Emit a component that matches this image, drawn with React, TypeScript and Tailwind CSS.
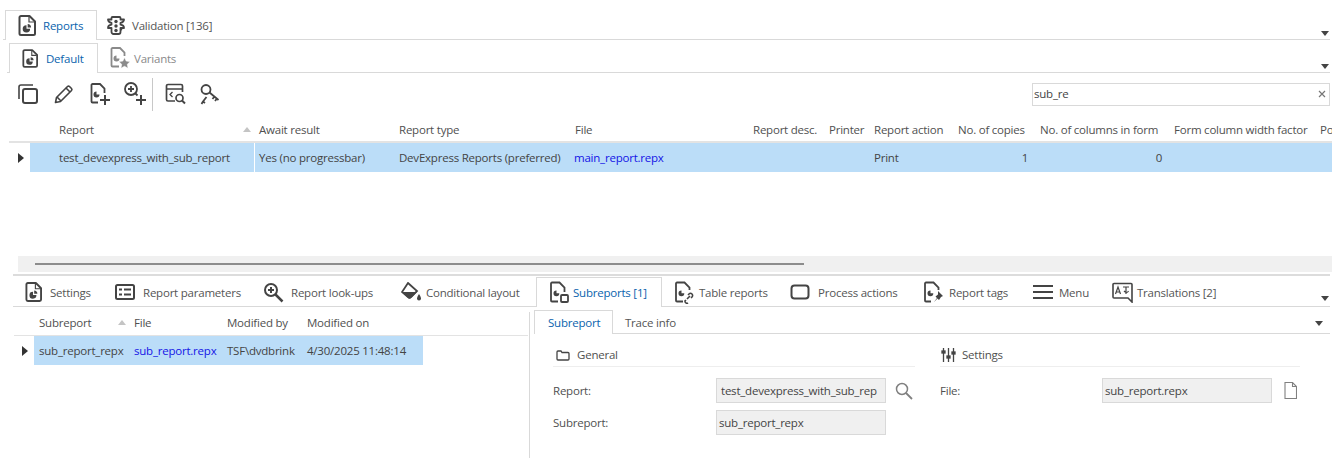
import React from "react";

const stroke = "#444444";

function Doc({ children, w = 18, h = 21, color = stroke }: { children?: React.ReactNode; w?: number; h?: number; color?: string }) {
  return (
    <svg width={w} height={h} viewBox="0 0 18 21" fill="none" className="shrink-0">
      <path d="M3 1h8.500L17 6.500V18.500A1.500 1.500 0 0 1 15.500 20H3A1.500 1.500 0 0 1 1.500 18.500V2.500A1.500 1.500 0 0 1 3 1z" stroke={color} strokeWidth="2" strokeLinejoin="round" />
      <path d="M11 1.500V7h5.500" stroke={color} strokeWidth="1.200" />
      {children}
    </svg>
  );
}
const Pie = ({ c = stroke }: { c?: string }) => (
  <g fill={c}>
    <path d="M8.500 10.200v3.600h3.600a3.700 3.700 0 1 1-3.600-3.600z" />
    <path d="M9.700 9a3.600 3.600 0 0 1 3.400 3.400H9.700z" />
  </g>
);
const DocPie = ({ w = 18, h = 21 }: { w?: number; h?: number }) => <Doc w={w} h={h}><Pie /></Doc>;

function Ic({ w, h, children }: { w: number; h: number; children: React.ReactNode }) {
  return (
    <svg width={w} height={h} viewBox={`0 0 ${w} ${h}`} fill="none" stroke={stroke} strokeWidth="2" className="shrink-0">
      {children}
    </svg>
  );
}

function Caret() {
  return (
    <svg width="8" height="5" viewBox="0 0 8 5" className="shrink-0">
      <path d="M0 0h8L4 5z" fill="#444444" />
    </svg>
  );
}
const SortUp = () => (
  <svg width="8" height="5" viewBox="0 0 8 5" className="shrink-0">
    <path d="M0 5h8L4 0z" fill="#c4c4c4" />
  </svg>
);
const RowMark = () => (
  <svg width="6" height="10" viewBox="0 0 6 10" className="shrink-0">
    <path d="M0 0l6 5-6 5z" fill="#333333" />
  </svg>
);

function Tab({ active, icon, label, w, h, gap = 8, pl = 12, muted }: { active?: boolean; icon?: React.ReactNode; label: string; w: number; h: number; gap?: number; pl?: number; muted?: boolean }) {
  return (
    <div
      style={{ width: w, height: h, paddingLeft: pl, gap }}
      className={
        "flex items-center shrink-0 whitespace-nowrap -mb-px " +
        (active
          ? "bg-white border border-b-0 border-[#d9d9d9] text-[#0a63ad] relative "
          : muted
          ? "text-[#8a8a8a] border border-transparent "
          : "text-[#555555] border border-transparent ")
      }
    >
      {icon}
      <span className="pt-[1px]">{label}</span>
    </div>
  );
}

function Tool({ w, children }: { w: number; children: React.ReactNode }) {
  return <div style={{ width: w }} className="flex items-center justify-start shrink-0">{children}</div>;
}

function Cell({ w, pl = 5, pr = 0, right, blue, children }: { w: number; pl?: number; pr?: number; right?: boolean; blue?: boolean; children?: React.ReactNode }) {
  return (
    <div
      style={{ width: w, paddingLeft: pl, paddingRight: pr }}
      className={
        "h-full flex items-center shrink-0 whitespace-nowrap overflow-hidden " +
        (right ? "justify-end " : "") +
        (blue ? "text-[#1414e6] " : "")
      }
    >
      {children}
    </div>
  );
}

const Plus = ({ x, y }: { x: number; y: number }) => (
  <path d={`M${x - 5} ${y}h10M${x} ${y - 5}v10`} strokeWidth="2" stroke={stroke} />
);

function Field({ label, value, lw, pl = 2, icon }: { label: string; value: string; lw: number; pl?: number; icon?: React.ReactNode }) {
  return (
    <div className="flex items-center h-[25px]">
      <div style={{ width: lw }} className="shrink-0">{label}</div>
      <div style={{ paddingLeft: pl }} className="w-[170px] h-[25px] shrink-0 bg-[#f0f0f0] border border-[#d9d9d9] flex items-center whitespace-nowrap overflow-hidden text-[#444444]">{value}</div>
      {icon}
    </div>
  );
}

export default function App() {
  return (
    <div className="w-[1334px] h-[458px] overflow-hidden bg-white text-[11.5px] leading-[16px] text-[#505050] tracking-[-0.22px]" style={{ fontFamily: '"Open Sans", "Noto Sans", sans-serif' }}>
      {/* top tabs */}
      <div className="h-[40px] pt-[10px] ml-[3px] mr-[4px] border-b border-[#d9d9d9] flex items-end pl-[2px]">
        <Tab active w={92} h={30} pl={12} gap={7} label="Reports" icon={<DocPie w={18} h={21} />} />
        <Tab w={126} h={30} pl={9} gap={7} label="Validation [136]" icon={
          <Ic w={18} h={19}>
            <path d="M5.500 1h7a1 1 0 0 1 1 1v1.500h3.500c0 2-1.500 3-3.500 3.300v1.900c2 .3 3.500 1.300 3.500 3.300h-3.500v1.500c2 .3 0 0 0 0v2.500a2 2 0 0 1-2 2h-5a2 2 0 0 1-2-2V12h0H1c0-2 1.500-3 3.500-3.300V6.800C2.500 6.500 1 5.500 1 3.500h3.500V2a1 1 0 0 1 1-1z" strokeWidth="1.800" strokeLinejoin="round" />
            <circle cx="9" cy="5.500" r="1.700" fill={stroke} stroke="none" />
            <circle cx="9" cy="10" r="1.700" fill={stroke} stroke="none" />
            <circle cx="9" cy="14.500" r="1.700" fill={stroke} stroke="none" />
          </Ic>
        } />
        <div className="ml-auto mb-[3px] mr-[1px]"><Caret /></div>
      </div>
      {/* second tabs */}
      <div className="h-[33px] pt-[3px] ml-[7px] mr-[4px] border-b border-[#d9d9d9] flex items-end pl-[2px]">
        <Tab active w={89} h={30} pl={12} gap={8} label="Default" icon={<DocPie w={16} h={19} />} />
        <Tab muted w={100} h={30} pl={11} gap={4} label="Variants" icon={
          <svg width="20" height="23" viewBox="0 0 20 23" fill="none" className="shrink-0">
            <path d="M9 19.500H2.500a1 1 0 0 1-1-1V2a1 1 0 0 1 1-1h7.500l4.500 4.500V9" stroke="#8a8a8a" strokeWidth="1.800" />
            <path d="M6.500 8.500v3h3a3 3 0 1 1-3-3z" fill="#8a8a8a" />
            <path d="M14.500 10.500l1.700 3.600 4 .5-2.900 2.700.8 4-3.600-2-3.600 2 .8-4-2.900-2.700 4-.5z" fill="#8a8a8a" stroke="#fff" strokeWidth=".6" />
          </svg>
        } />
        <div className="ml-auto mb-[3px] mr-[1px]"><Caret /></div>
      </div>
      {/* toolbar */}
      <div className="h-[42px] flex items-center pl-[18px] pr-[4px]">
        <Tool w={36}>
          <Ic w={20} h={20}>
            <rect x="5" y="5" width="14" height="14" rx="2" />
            <path d="M1 15V3a2 2 0 0 1 2-2h12" strokeWidth="1.600" />
          </Ic>
        </Tool>
        <Tool w={36}>
          <svg width="20" height="20" viewBox="0 0 20 20" fill="none" stroke={stroke} strokeWidth="1.600">
            <path d="M1.500 18.500l1-5L13.500 2.500a1.500 1.500 0 0 1 2 0l2 2a1.500 1.500 0 0 1 0 2L6.500 17.500z" strokeLinejoin="round" />
            <path d="M12 4l4 4M3 13l4 4" />
          </svg>
        </Tool>
        <Tool w={33}>
          <svg width="21" height="23" viewBox="0 0 21 23" fill="none">
            <path d="M8 19.500H2.500a1 1 0 0 1-1-1V2a1 1 0 0 1 1-1h7.500l4.500 4.500V10" stroke={stroke} strokeWidth="1.800" />
            <path d="M6.500 8.500v3h3a3 3 0 1 1-3-3z" fill={stroke} />
            <Plus x={15} y={17} />
          </svg>
        </Tool>
        <Tool w={29}>
          <svg width="24" height="24" viewBox="0 0 24 24" fill="none" stroke={stroke} strokeWidth="1.800" className="mb-[1px]">
            <circle cx="8" cy="7" r="6" />
            <path d="M8 4v6M5 7h6" />
            <path d="M12.500 11.500l2 2" />
            <Plus x={18} y={18} />
          </svg>
        </Tool>
        <div className="w-px h-[33px] bg-[#c8c8c8] shrink-0 mr-[12px]" />
        <Tool w={35}>
          <svg width="22" height="22" viewBox="0 0 22 22" fill="none" stroke={stroke} strokeWidth="1.700">
            <path d="M10 18H3a1.500 1.500 0 0 1-1.500-1.500V3A1.500 1.500 0 0 1 3 1.500h13A1.500 1.500 0 0 1 17.500 3v6M1.500 6h16" />
            <path d="M7.500 9L5 11.500 7.500 14" strokeWidth="1.300" />
            <circle cx="14.500" cy="15" r="3.500" />
            <path d="M17 17.500l3 3" strokeWidth="2" />
          </svg>
        </Tool>
        <Tool w={24}>
          <svg width="20" height="21" viewBox="0 0 20 21" fill="none" stroke={stroke} strokeWidth="1.800">
            <circle cx="6" cy="5.500" r="4.500" />
            <path d="M9.500 8.500l9 7.500M14.500 12.500l-2 2.500M17 14.500l-2 2.500" />
            <path d="M6.500 13L3 17.500M3 17.500l2 1.500M3 17.500L1.500 20" />
          </svg>
        </Tool>
        <div className="ml-auto w-[298px] h-[23px] border border-[#d9d9d9] flex items-center pl-[1px] pr-[3px] text-[#444444]">
          <span>sub_re</span>
          <svg width="8" height="8" viewBox="0 0 8 8" className="ml-auto" stroke="#777777" strokeWidth="1.200"><path d="M1 1l6 6M7 1L1 7" /></svg>
        </div>
      </div>
      {/* main grid header */}
      <div className="h-[28px] pt-[3px] ml-[9px] mr-[2px] border-b-2 border-[#e3e3e3] flex items-center">
        <Cell w={21} pl={0} />
        <Cell w={224} pl={29}>
          <span>Report</span>
          <span className="ml-auto mr-[3px]"><SortUp /></span>
        </Cell>
        <Cell w={140}>Await result</Cell>
        <Cell w={176}>Report type</Cell>
        <Cell w={178}>File</Cell>
        <Cell w={76}>Report desc.</Cell>
        <Cell w={45}>Printer</Cell>
        <Cell w={84}>Report action</Cell>
        <Cell w={81}>No. of copies</Cell>
        <Cell w={134} pl={6}>No. of columns in form</Cell>
        <Cell w={149} pl={6}>Form column width factor</Cell>
        <Cell w={15} pl={3}>Po</Cell>
      </div>
      {/* main grid row */}
      <div className="h-[29px] flex ml-[18px] mr-[2px] text-[#444444]">
        <div className="w-[12px] h-full flex items-center shrink-0"><RowMark /></div>
        <div className="h-full flex-1 flex bg-[#bbddf8] items-center overflow-hidden">
          <Cell w={224} pl={29}>test_devexpress_with_sub_report</Cell>
          <div className="w-px h-full bg-white shrink-0" />
          <Cell w={139} pl={4}>Yes (no progressbar)</Cell>
          <Cell w={176}>DevExpress Reports (preferred)</Cell>
          <Cell w={178} pl={4} blue>main_report.repx</Cell>
          <Cell w={76} />
          <Cell w={45} />
          <Cell w={84}>Print</Cell>
          <Cell w={81} pr={6} right>1</Cell>
          <Cell w={134} pr={6} right>0</Cell>
        </div>
      </div>
      {/* scrollbar */}
      <div className="mt-[84px] h-[16px] ml-[18px] mr-[2px] bg-[#f0f0f0] flex items-center pl-[17px]">
        <div className="w-[769px] h-[2px] bg-[#8c8c8c]" />
      </div>
      {/* lower tabs */}
      <div className="mt-[2px] h-[2px] ml-[13px] mr-[4px] bg-[#dcdcdc]" />
      <div className="h-[31px] ml-[13px] mr-[4px] border-b border-[#d9d9d9] flex items-end">
        <Tab w={90} h={30} pl={11} gap={8} label="Settings" icon={<DocPie w={17} h={20} />} />
        <Tab w={149} h={30} pl={11} gap={8} label="Report parameters" icon={
          <Ic w={20} h={16}>
            <rect x="1" y="1" width="18" height="14" rx="1.500" />
            <path d="M4 5.500h3M9 5.500h7M4 10.500h3M9 10.500h7" />
          </Ic>
        } />
        <Tab w={136} h={30} pl={10} gap={7} label="Report look-ups" icon={
          <svg width="21" height="21" viewBox="0 0 21 21" fill="none" stroke={stroke} strokeWidth="2" className="shrink-0">
            <circle cx="8" cy="8" r="6" />
            <path d="M8 5v6M5 8h6" />
            <path d="M12.500 12.500l7 7" strokeWidth="2.500" />
          </svg>
        } />
        <Tab w={148} h={30} pl={12} gap={5} label="Conditional layout" icon={
          <svg width="20" height="20" viewBox="0 0 20 20" className="shrink-0">
            <path d="M7 1l9 8-6 6a2 2 0 0 1-3 0L1 10z" fill="none" stroke={stroke} strokeWidth="1.800" />
            <path d="M1 10h15l-6 6a2 2 0 0 1-3 0z" fill={stroke} />
            <path d="M18 12c1.500 2.500 2 3.500 2 4.500a2 2 0 0 1-4 0c0-1 .5-2 2-4.500z" fill={stroke} />
          </svg>
        } />
        <Tab active w={126} h={30} pl={12} gap={3} label="Subreports [1]" icon={
          <svg width="21" height="23" viewBox="0 0 21 23" fill="none" className="shrink-0">
            <path d="M9 20.500H3a1 1 0 0 1-1-1V2.500a1 1 0 0 1 1-1h7.500l5 5V11" stroke={stroke} strokeWidth="1.800" />
            <path d="M7.500 9.500v2.800h2.800a2.900 2.900 0 1 1-2.800-2.800z" fill={stroke} />
            <rect x="12" y="14" width="7" height="7" rx="1" stroke={stroke} strokeWidth="1.800" />
          </svg>
        } />
        <Tab w={127} h={30} pl={11} gap={4} label="Table reports" icon={
          <svg width="21" height="23" viewBox="0 0 21 23" fill="none" className="shrink-0">
            <path d="M9 20.500H3a1 1 0 0 1-1-1V2.500a1 1 0 0 1 1-1h7.500l5 5V9" stroke={stroke} strokeWidth="1.800" />
            <path d="M7.500 9.500v2.800h2.800a2.900 2.900 0 1 1-2.800-2.800z" fill={stroke} />
            <path d="M12 19l-1 1a2 2 0 0 0 3 2M14 14l1-1a2 2 0 0 1 3 3l-1 1M13 18l3-3" stroke={stroke} strokeWidth="1.600" />
          </svg>
        } />
        <Tab w={133} h={30} pl={0} gap={8} label="Process actions" icon={
          <Ic w={20} h={16}>
            <rect x="1.500" y="1.500" width="17" height="13" rx="3" />
          </Ic>
        } />
        <Tab w={109} h={30} pl={0} gap={5} label="Report tags" icon={
          <svg width="21" height="23" viewBox="0 0 21 23" fill="none" className="shrink-0">
            <path d="M8 20.500H3a1 1 0 0 1-1-1V2.500a1 1 0 0 1 1-1h7.500l5 5V9" stroke={stroke} strokeWidth="1.800" />
            <path d="M7.500 9.500v2.800h2.800a2.900 2.900 0 1 1-2.800-2.800z" fill={stroke} />
            <path d="M15 10l5 5-2 1-2 3-1.500-1.500L11 21l3-4-1.500-1.500 2.500-2z" fill={stroke} />
          </svg>
        } />
        <Tab w={80} h={30} pl={0} gap={6} label="Menu" icon={
          <Ic w={21} h={16}>
            <path d="M1 2h20M1 8h20M1 14h20" />
          </Ic>
        } />
        <Tab w={120} h={30} pl={0} gap={4} label="Translations [2]" icon={
          <svg width="21" height="21" viewBox="0 0 21 21" fill="none" className="shrink-0">
            <path d="M2 1.500h17a1 1 0 0 1 1 1V20l-4-4H2a1 1 0 0 1-1-1V2.500a1 1 0 0 1 1-1z" stroke={stroke} strokeWidth="1.600" />
            <path d="M3.500 12L6 5l2.500 7M4.500 10h3M11 5h6M12 9c2 2 3.500 2 4.500 0M14 5v7" stroke={stroke} strokeWidth="1.200" />
          </svg>
        } />
        <div className="ml-auto mb-[5px] mr-[1px]"><Caret /></div>
      </div>
      {/* lower panels */}
      <div className="flex h-[151px] ml-[14px]">
        <div className="w-[515px] shrink-0">
          <div className="h-[29px] pt-[3px] border-b border-[#e3e3e3] flex items-center mr-[1px]">
            <Cell w={20} pl={0} />
            <Cell w={95} pl={5}>
              <span>Subreport</span>
              <span className="ml-auto mr-[3px]"><SortUp /></span>
            </Cell>
            <Cell w={93}>File</Cell>
            <Cell w={80}>Modified by</Cell>
            <Cell w={116}>Modified on</Cell>
          </div>
          <div className="h-[29px] flex text-[#444444]">
            <div className="w-[20px] h-full flex items-center pl-[8px] shrink-0"><RowMark /></div>
            <div className="h-full w-[389px] flex items-center bg-[#bbddf8] shrink-0">
              <Cell w={95}>sub_report_repx</Cell>
              <Cell w={93} pl={5} blue>sub_report.repx</Cell>
              <Cell w={80}>TSF\dvdbrink</Cell>
              <Cell w={121}>4/30/2025 11:48:14</Cell>
            </div>
          </div>
        </div>
        <div className="flex-1 min-w-0 mt-[5px] border-l border-[#d9d9d9] pl-[4px]">
          <div className="h-[22px] mr-[4px] border-b border-[#d9d9d9] flex items-end">
            <Tab active w={79} h={24} pl={13} gap={0} label="Subreport" />
            <Tab w={90} h={24} pl={11} gap={0} label="Trace info" />
            <div className="ml-auto mb-[7px] mr-[7px]"><Caret /></div>
          </div>
          <div className="flex pt-[10px]">
            <div className="w-[362px] ml-[19px] shrink-0">
              <div className="h-[23px] border-b border-[#eeeeee] flex items-center pl-[3px] gap-[7px]">
                <Ic w={14} h={12}>
                  <path d="M1 3a1 1 0 0 1 1-1h3l1 1.500h6a1 1 0 0 1 1 1V10a1 1 0 0 1-1 1H2a1 1 0 0 1-1-1z" strokeWidth="1.300" />
                </Ic>
                <span>General</span>
              </div>
              <div className="pt-[11px] flex flex-col gap-[7px]">
                <Field lw={163} pl={4} label="Report:" value="test_devexpress_with_sub_rep" icon={
                  <svg width="18" height="18" viewBox="0 0 18 18" fill="none" stroke="#808080" strokeWidth="1.500" className="ml-[9px] shrink-0">
                    <circle cx="7" cy="7" r="5.500" />
                    <path d="M11 11l6 6" strokeWidth="1.800" />
                  </svg>
                } />
                <Field lw={163} pl={2} label="Subreport:" value="sub_report_repx" />
              </div>
            </div>
            <div className="w-[360px] ml-[25px] shrink-0">
              <div className="h-[23px] border-b border-[#eeeeee] flex items-center gap-[6px]">
                <svg width="15" height="14" viewBox="0 0 15 14" stroke={stroke} strokeWidth="1.300" fill={stroke} className="shrink-0 ml-[1px]">
                  <path d="M2.500 0v14M7.500 0v14M12.500 0v14" />
                  <rect x="1" y="3" width="3" height="2" />
                  <rect x="6" y="8" width="3" height="2" />
                  <rect x="11" y="4" width="3" height="2" />
                </svg>
                <span>Settings</span>
              </div>
              <div className="pt-[11px]">
                <Field lw={162} pl={2} label="File:" value="sub_report.repx" icon={
                  <svg width="13" height="17" viewBox="0 0 13 17" fill="none" stroke="#808080" strokeWidth="1.100" className="ml-[12px] shrink-0">
                    <path d="M1 .5h7.500l4 4v12H1zM8.500.5v4h4" />
                  </svg>
                } />
              </div>
            </div>
          </div>
        </div>
      </div>
    </div>
  );
}
